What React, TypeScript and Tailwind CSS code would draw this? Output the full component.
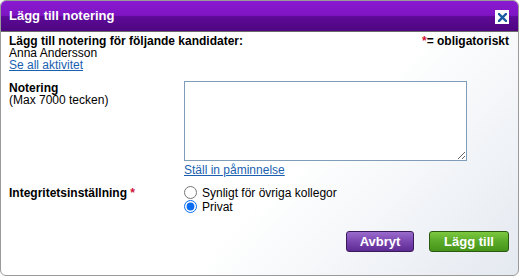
import React from "react";

export default function App() {
  return (
    <div className="w-[519px] h-[276px] bg-white" style={{ fontFamily: '"Liberation Sans", Arial, sans-serif' }}>
      <div className="w-[519px] h-[276px] flex flex-col rounded-[6px] border border-[#9a9a9a] overflow-hidden bg-[linear-gradient(135deg,#ffffff_0%,#ffffff_58%,#e4e9f0_100%)]">
        <div className="h-[31px] shrink-0 flex items-center justify-between pl-[8px] pr-[8px] bg-[linear-gradient(to_bottom,#8a1ad0_0%,#7e14c4_48%,#5e0a98_52%,#4e0680_100%)] border-b border-[#6a6a6a]">
          <span className="text-white font-bold text-[13px]">Lägg till notering</span>
          <div className="w-[14px] h-[14px] bg-white flex items-center justify-center mt-[2px] mr-[1px]">
            <svg width="9" height="9" viewBox="0 0 9 9">
              <path d="M1 1 L8 8 M8 1 L1 8" stroke="#1a5aa0" strokeWidth="2.4" strokeLinecap="square" />
            </svg>
          </div>
        </div>
        <div className="flex-1 flex flex-col pl-[8px] pr-[8px] pt-[3px] text-[12px] leading-[12px] text-black">
          <div className="flex justify-between">
            <div className="flex flex-col">
              <span className="font-bold">Lägg till notering för följande kandidater:</span>
              <span>Anna Andersson</span>
              <a className="text-[#1a5fb0] underline">Se all aktivitet</a>
            </div>
            <span className="font-bold pr-[1px]"><span className="text-[#d0103a]">*</span>= obligatoriskt</span>
          </div>
          <div className="flex mt-[10px]">
            <div className="w-[175px] flex flex-col pt-[1px]">
              <span className="font-bold">Notering</span>
              <span>(Max 7000 tecken)</span>
            </div>
            <div className="flex flex-col">
              <textarea className="w-[283px] h-[80px] border border-[#7f9db9] bg-white resize-y block outline-none" />
              <a className="text-[#1a5fb0] underline mt-[3px]">Ställ in påminnelse</a>
            </div>
          </div>
          <div className="flex mt-[10px]">
            <div className="w-[175px] pt-[1px] font-bold">Integritetsinställning <span className="text-[#d0103a]">*</span></div>
            <div className="flex flex-col gap-[1px]">
              <label className="flex items-center">
                <input type="radio" name="p" className="w-[13px] h-[13px] m-0 mr-[5px] accent-[#0a6cf0]" />
                <span>Synligt för övriga kollegor</span>
              </label>
              <label className="flex items-center">
                <input type="radio" name="p" defaultChecked className="w-[13px] h-[13px] m-0 mr-[5px] accent-[#0a6cf0]" />
                <span>Privat</span>
              </label>
            </div>
          </div>
          <div className="flex justify-end gap-[15px] mt-[18px] pr-[1px]">
            <button className="w-[68px] h-[21px] rounded-[3px] border border-[#3a1a5a] text-white font-bold text-[13px] bg-[linear-gradient(to_bottom,#9a6ccc_0%,#7a46b0_50%,#5e2a94_100%)]">Avbryt</button>
            <button className="w-[80px] h-[21px] rounded-[3px] border border-[#2a5a10] text-white font-bold text-[13px] bg-[linear-gradient(to_bottom,#7cc840_0%,#5aaa28_50%,#46941a_100%)]">Lägg till</button>
          </div>
        </div>
      </div>
    </div>
  );
}
